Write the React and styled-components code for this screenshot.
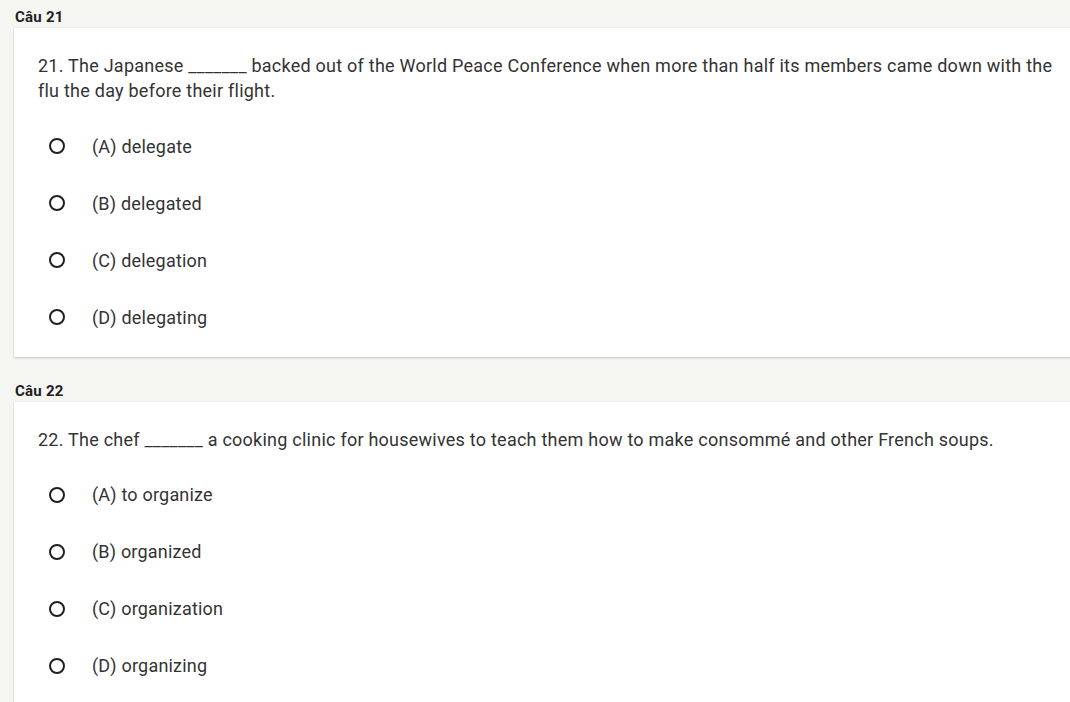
import styled, { createGlobalStyle } from "styled-components";

const GlobalStyle = createGlobalStyle`
  html, body {
    margin: 0;
    padding: 0;
    background: #f5f5f2;
    overflow: hidden;
  }
  body {
    font-family: Roboto, "Liberation Sans", sans-serif;
  }
`;

const questions = [
  {
    id: 21,
    text: "21. The Japanese _______ backed out of the World Peace Conference when more than half its members came down with the flu the day before their flight.",
    options: ["(A) delegate", "(B) delegated", "(C) delegation", "(D) delegating"],
  },
  {
    id: 22,
    text: "22. The chef _______ a cooking clinic for housewives to teach them how to make consommé and other French soups.",
    options: ["(A) to organize", "(B) organized", "(C) organization", "(D) organizing"],
  },
];

export default function App() {
  return (
    <>
      <GlobalStyle />
      <Page>
        {questions.map((q) => (
          <Section key={q.id}>
            <Label>Câu {q.id}</Label>
            <Card>
              <Question>{q.text}</Question>
              <Options>
                {q.options.map((opt) => (
                  <Option key={opt}>
                    <Radio />
                    <OptionText>{opt}</OptionText>
                  </Option>
                ))}
              </Options>
            </Card>
          </Section>
        ))}
      </Page>
    </>
  );
}

const Page = styled.div`
  padding: 7px 0 0 14px;
  display: flex;
  flex-direction: column;
  gap: 24px;
`;

const Section = styled.section`
  display: flex;
  flex-direction: column;
`;

const Label = styled.div`
  font-size: 15px;
  font-weight: 700;
  line-height: 20px;
  letter-spacing: 0.25px;
  color: #202124;
  padding-left: 1px;
  margin-bottom: 1px;
`;

const Card = styled.div`
  background: #fff;
  width: 1100px;
  padding: 25px 0 11px 24px;
  box-shadow: 0 1px 2px rgba(0, 0, 0, 0.18), 0 0 1px rgba(0, 0, 0, 0.12);
`;

const Question = styled.div`
  width: 1020px;
  font-size: 18px;
  line-height: 25px;
  letter-spacing: 0.24px;
  color: #333;
  margin-bottom: 14.5px;
`;

const Options = styled.div`
  display: flex;
  flex-direction: column;
`;

const Option = styled.label`
  display: flex;
  align-items: center;
  height: 57px;
  padding-left: 11px;
`;

const Radio = styled.span`
  width: 16px;
  height: 16px;
  box-sizing: border-box;
  border: 2px solid #202020;
  border-radius: 50%;
  flex-shrink: 0;
`;

const OptionText = styled.span`
  margin-left: 27px;
  font-size: 18px;
  letter-spacing: 0.2px;
  color: #333;
`;
